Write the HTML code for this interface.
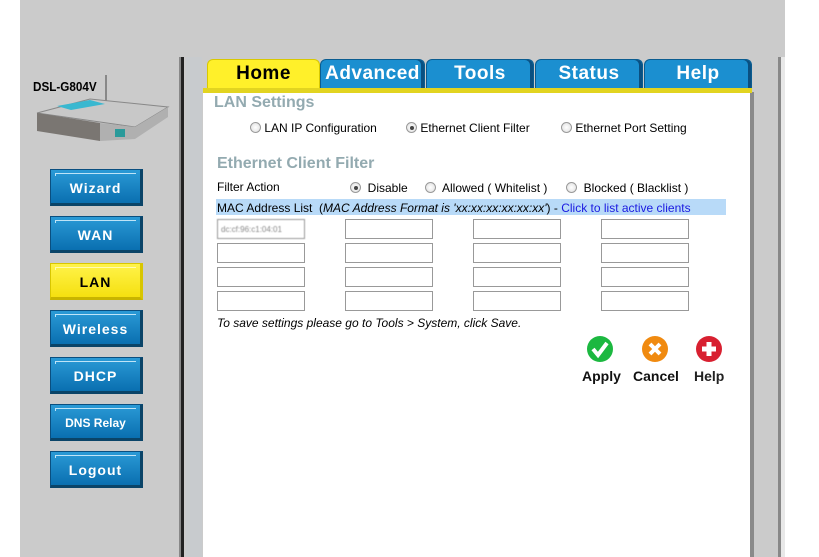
<!DOCTYPE html>
<html><head><meta charset="utf-8"><style>
*{margin:0;padding:0;box-sizing:border-box}
body{width:819px;height:557px;background:#fff;position:relative;overflow:hidden;font-family:"Liberation Sans",Arial,sans-serif}
.a{position:absolute}
.nav{position:absolute;left:50px;width:93px;height:37px;background:linear-gradient(#2b9ad6,#0a6fb0);border:1px solid #0a4f80;border-right:3px solid #0a4468;border-bottom:3px solid #0a4468;color:#fff;font-weight:bold;font-size:14px;text-align:center;line-height:37px;letter-spacing:1px}
.nav:before{content:"";position:absolute;left:4px;top:3px;right:4px;height:2px;border-top:1px solid #bfe4f7;border-left:1px solid #bfe4f7}
.nav.y{background:linear-gradient(#fff34a,#f5e010);color:#000;border-color:#d8c600;border-right-color:#d8c600;border-bottom-color:#c8b400}
.nav.y:before{border-color:#fffbb0}
.tab{position:absolute;top:59px;height:29px;background:#1b8fd0;border:1px solid #0a5c90;border-bottom:none;border-radius:6px 6px 0 0;color:#fff;font-weight:bold;font-size:19px;letter-spacing:0.5px;text-align:center;line-height:27px;box-shadow:inset -3px 0 0 #0a4f80}
.inp{position:absolute;width:88px;height:20px;border:1px solid #999;background:#fff}
.r{display:inline-block;width:11px;height:11px;border-radius:50%;border:1px solid #999;background:radial-gradient(#fff,#ddd);vertical-align:-1px;position:relative}
.r.on:after{content:"";position:absolute;left:2.5px;top:2.5px;width:4px;height:4px;border-radius:50%;background:#444}
.t{position:absolute;font-size:12px;color:#000;white-space:nowrap}
</style></head><body>
<div class="a" style="left:20px;top:0;width:765px;height:557px;background:#cbcbcb"></div>
<div class="a" style="left:179px;top:57px;width:2px;height:500px;background:#888"></div>
<div class="a" style="left:181px;top:57px;width:3px;height:500px;background:#222"></div>
<div class="a" style="left:186px;top:57px;width:16px;height:500px;background:#c8cbce"></div>
<div class="a" style="left:203px;top:88px;width:547px;height:469px;background:#fff"></div>
<div class="a" style="left:750px;top:92px;width:4px;height:465px;background:#8a8a8a"></div>
<div class="a" style="left:778px;top:57px;width:3px;height:500px;background:#888"></div>
<div class="a" style="left:781px;top:57px;width:4px;height:500px;background:#e8e8e8"></div>
<div class="a" style="left:203px;top:88px;width:549px;height:5px;background:#e2d420"></div>

<div class="t" style="left:33px;top:79px;font-weight:bold;font-size:13px;transform:scaleX(.9);transform-origin:left">DSL-G804V</div>
<div class="a" style="left:105px;top:75px;width:2px;height:32px;background:#888"></div>
<svg class="a" style="left:35px;top:95px" width="135" height="50"><polygon points="2,18 55,4 133,12 100,32" fill="#c8c8c8" stroke="#888"/><polygon points="2,18 65,28 65,46 2,36" fill="#7a7672"/><polygon points="65,28 100,32 133,12 133,22 100,44 65,46" fill="#b0b0b0"/><polygon points="22,11 55,5 70,9 36,15" fill="#3ab8d0"/><rect x="80" y="34" width="10" height="8" fill="#2a9a9a"/></svg>

<div class="nav" style="top:169px">Wizard</div>
<div class="nav" style="top:216px">WAN</div>
<div class="nav y" style="top:263px">LAN</div>
<div class="nav" style="top:310px">Wireless</div>
<div class="nav" style="top:357px">DHCP</div>
<div class="nav" style="top:404px;font-size:12px;letter-spacing:0">DNS Relay</div>
<div class="nav" style="top:451px">Logout</div>

<div class="tab" style="left:207px;width:113px;background:#fff02a;border-color:#d8c800;color:#000;box-shadow:none">Home</div>
<div class="tab" style="left:320px;width:105px">Advanced</div>
<div class="tab" style="left:426px;width:108px">Tools</div>
<div class="tab" style="left:535px;width:108px">Status</div>
<div class="tab" style="left:644px;width:108px">Help</div>

<div class="t" style="left:214px;top:94px;font-size:16px;font-weight:bold;color:#93aab0">LAN Settings</div>
<div class="t" style="left:250px;top:121px"><span class="r"></span> LAN IP Configuration</div>
<div class="t" style="left:406px;top:121px"><span class="r on"></span> Ethernet Client Filter</div>
<div class="t" style="left:561px;top:121px"><span class="r"></span> Ethernet Port Setting</div>
<div class="t" style="left:217px;top:155px;font-size:16px;font-weight:bold;color:#93aab0">Ethernet Client Filter</div>
<div class="t" style="left:217px;top:180px">Filter Action</div>
<div class="t" style="left:350px;top:181px"><span class="r on"></span>&nbsp; Disable</div>
<div class="t" style="left:425px;top:181px"><span class="r"></span>&nbsp; Allowed ( Whitelist )</div>
<div class="t" style="left:566px;top:181px"><span class="r"></span>&nbsp; Blocked ( Blacklist )</div>
<div class="a" style="left:216px;top:199px;width:510px;height:16px;background:#b8daf8"></div>
<div class="t" style="left:217px;top:201px">MAC Address List &nbsp;(<i>MAC Address Format is 'xx:xx:xx:xx:xx:xx'</i>) - <span style="color:#1a1ae0">Click to list active clients</span></div>

<div class="inp" style="left:217px;top:219px;color:#888;font-size:8px;padding:5px 3px;filter:blur(.6px)">dc:cf:96:c1:04:01</div>
<div class="inp" style="left:345px;top:219px"></div><div class="inp" style="left:473px;top:219px"></div><div class="inp" style="left:601px;top:219px"></div>
<div class="inp" style="left:217px;top:243px"></div><div class="inp" style="left:345px;top:243px"></div><div class="inp" style="left:473px;top:243px"></div><div class="inp" style="left:601px;top:243px"></div>
<div class="inp" style="left:217px;top:267px"></div><div class="inp" style="left:345px;top:267px"></div><div class="inp" style="left:473px;top:267px"></div><div class="inp" style="left:601px;top:267px"></div>
<div class="inp" style="left:217px;top:291px"></div><div class="inp" style="left:345px;top:291px"></div><div class="inp" style="left:473px;top:291px"></div><div class="inp" style="left:601px;top:291px"></div>
<div class="t" style="left:217px;top:316px;font-style:italic">To save settings please go to Tools &gt; System, click Save.</div>

<svg class="a" style="left:585px;top:335px" width="30" height="28"><circle cx="15" cy="14" r="13" fill="#1cb840"/><path d="M8 14 L13 20 L22 8" stroke="#fff" stroke-width="4" fill="none"/></svg>
<svg class="a" style="left:640px;top:335px" width="30" height="28"><circle cx="15" cy="14" r="13" fill="#f08a10"/><path d="M10 9 L20 19 M20 9 L10 19" stroke="#fff" stroke-width="4"/></svg>
<svg class="a" style="left:694px;top:335px" width="30" height="28"><circle cx="15" cy="14" r="13" fill="#d82030"/><path d="M15 7 V21 M8 14 H22" stroke="#fff" stroke-width="5"/></svg>
<div class="t" style="left:582px;top:368px;font-size:14px;font-weight:bold;color:#111">Apply</div>
<div class="t" style="left:633px;top:368px;font-size:14px;font-weight:bold;color:#111">Cancel</div>
<div class="t" style="left:694px;top:368px;font-size:14px;font-weight:bold;color:#222">Help</div>
</body></html>
